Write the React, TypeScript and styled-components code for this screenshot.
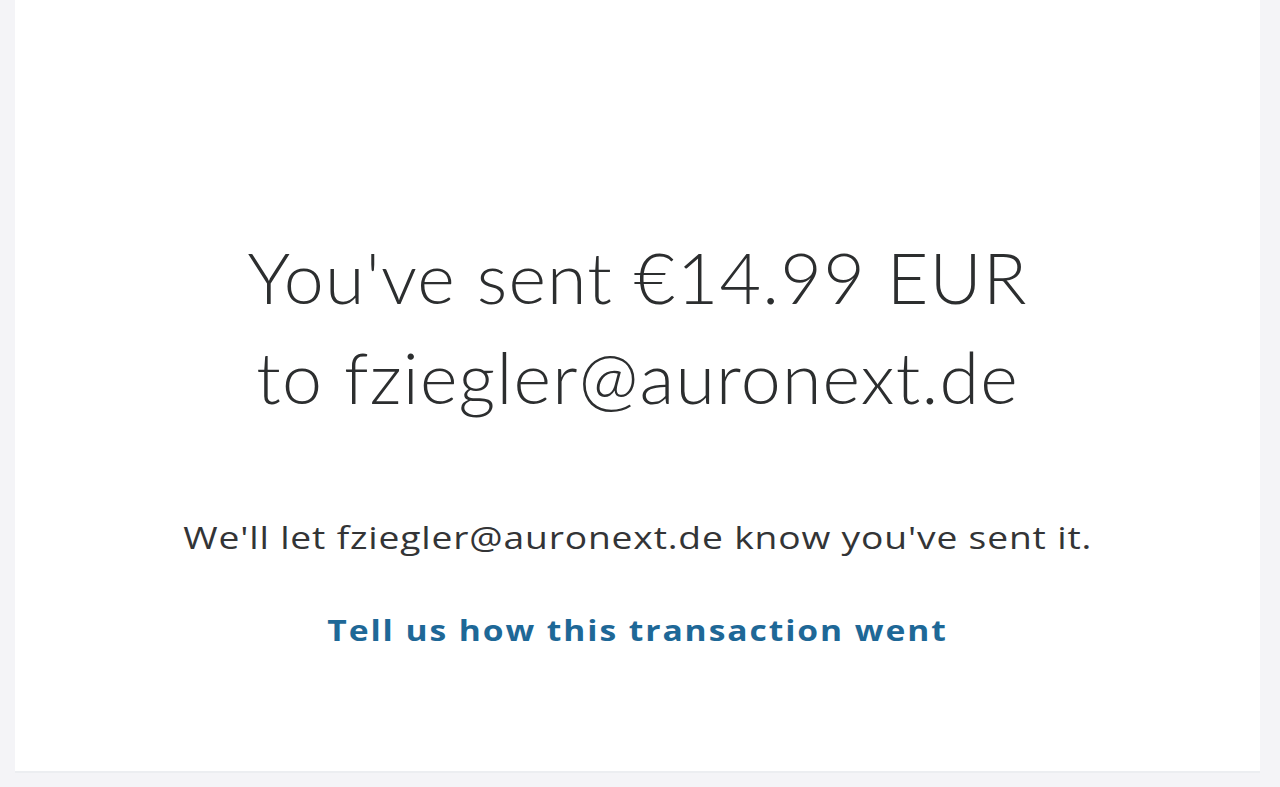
import React from "react";
import styled, { createGlobalStyle } from "styled-components";

const GlobalStyle = createGlobalStyle`
  html, body {
    margin: 0;
    padding: 0;
    background: #f4f4f7;
  }
  * { box-sizing: border-box; }
`;

const Page = styled.div`
  width: 1280px;
  height: 787px;
  padding: 0 20px 0 15px;
  background: #f4f4f7;
`;

const Card = styled.main`
  height: 773px;
  background: #ffffff;
  border-bottom: 2px solid #eceef1;
  display: flex;
  flex-direction: column;
  align-items: center;
  padding-top: 227px;
`;

const Heading = styled.h1`
  margin: 0;
  font-family: Lato, "Open Sans", sans-serif;
  font-weight: 300;
  font-size: 70px;
  line-height: 100px;
  color: #2c2e2f;
  text-align: center;
  letter-spacing: 1.2px;
  transform: scaleX(1.025);
`;

const Note = styled.p`
  margin: 90px 0 0;
  font-family: "Open Sans", "Noto Sans", sans-serif;
  font-weight: 400;
  font-size: 31px;
  line-height: 40px;
  color: #333436;
  text-align: center;
  letter-spacing: 0.7px;
  transform: scaleX(1.2);
`;

const FeedbackLink = styled.a`
  margin-top: 53px;
  font-family: "Open Sans", "Noto Sans", sans-serif;
  font-weight: 700;
  font-size: 28px;
  line-height: 40px;
  color: #1e6897;
  text-decoration: none;
  letter-spacing: 1.6px;
  transform: scaleX(1.2);
  cursor: pointer;
`;

export default function App() {
  return (
    <>
      <GlobalStyle />
      <Page>
        <Card>
          <Heading>
            You've sent €14.99 EUR
            <br />
            to fziegler@auronext.de
          </Heading>
          <Note>We'll let fziegler@auronext.de know you've sent it.</Note>
          <FeedbackLink href="#">Tell us how this transaction went</FeedbackLink>
        </Card>
      </Page>
    </>
  );
}
